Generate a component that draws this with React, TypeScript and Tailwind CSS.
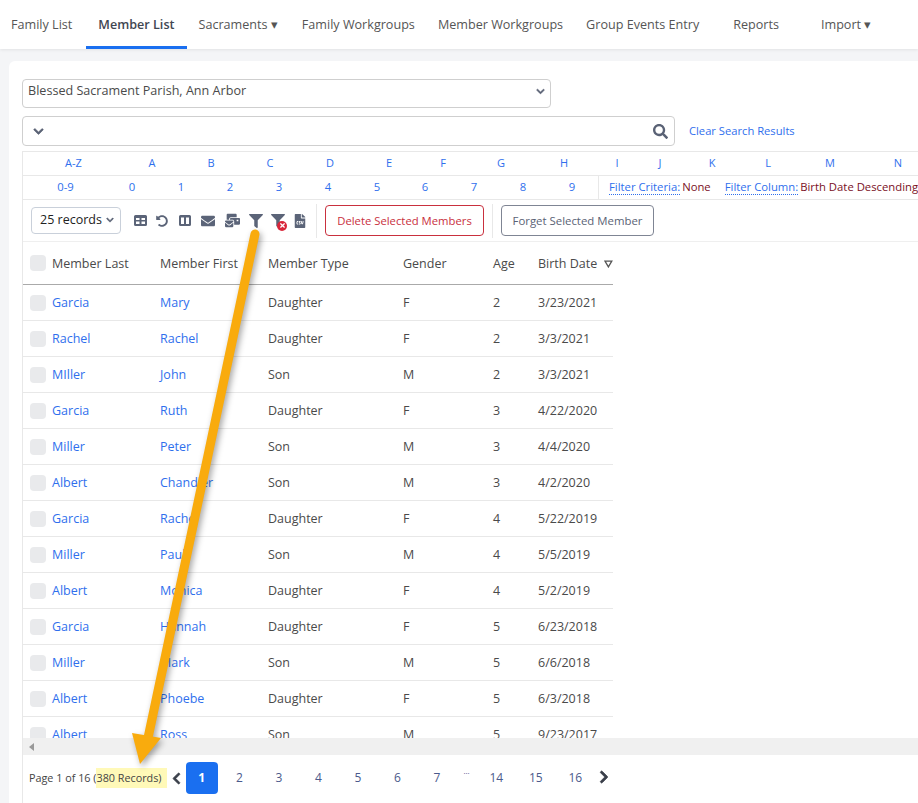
import { FaChevronDown, FaChevronLeft, FaChevronRight, FaEnvelope, FaFileCsv, FaFilter, FaMailBulk, FaSearch, FaTimes, FaUndoAlt } from 'react-icons/fa'

const navItems = [
  { label: 'Family List', cls: 'ml-[11px]' },
  { label: 'Member List', cls: 'ml-[14px] px-3 font-semibold text-[#3f4652] border-b-[3px] border-t-[3px] border-t-transparent border-b-[#1a6ff0]' },
  { label: 'Sacraments ▾', cls: 'ml-3' },
  { label: 'Family Workgroups', cls: 'ml-6' },
  { label: 'Member Workgroups', cls: 'ml-[23px]' },
  { label: 'Group Events Entry', cls: 'ml-[23px]' },
  { label: 'Reports', cls: 'ml-[34px]' },
  { label: 'Import ▾', cls: 'ml-[42px]' },
]

const letters = [
  { label: 'A-Z', w: 'w-[101px]' },
  { label: 'A', w: 'w-[56px]' },
  { label: 'B', w: 'w-[62px]' },
  { label: 'C', w: 'w-[56px]' },
  { label: 'D', w: 'w-[64px]' },
  { label: 'E', w: 'w-[54px]' },
  { label: 'F', w: 'w-[54px]' },
  { label: 'G', w: 'w-[62px]' },
  { label: 'H', w: 'w-[64px]' },
  { label: 'I', w: 'w-[42px]' },
  { label: 'J', w: 'w-[44px]' },
  { label: 'K', w: 'w-[60px]' },
  { label: 'L', w: 'w-[52px]' },
  { label: 'M', w: 'w-[72px]' },
  { label: 'N', w: 'w-[64px]' },
]

const digits = [
  { label: '0-9', w: 'w-[85px]' },
  { label: '0', w: 'w-[48px]' },
  { label: '1', w: 'w-[50px]' },
  { label: '2', w: 'w-[48px]' },
  { label: '3', w: 'w-[50px]' },
  { label: '4', w: 'w-[48px]' },
  { label: '5', w: 'w-[50px]' },
  { label: '6', w: 'w-[46px]' },
  { label: '7', w: 'w-[52px]' },
  { label: '8', w: 'w-[46px]' },
  { label: '9', w: 'w-[52px]' },
]

const members = [
  ['Garcia', 'Mary', 'Daughter', 'F', '2', '3/23/2021'],
  ['Rachel', 'Rachel', 'Daughter', 'F', '2', '3/3/2021'],
  ['MIller', 'John', 'Son', 'M', '2', '3/3/2021'],
  ['Garcia', 'Ruth', 'Daughter', 'F', '3', '4/22/2020'],
  ['Miller', 'Peter', 'Son', 'M', '3', '4/4/2020'],
  ['Albert', 'Chandler', 'Son', 'M', '3', '4/2/2020'],
  ['Garcia', 'Rachel', 'Daughter', 'F', '4', '5/22/2019'],
  ['Miller', 'Paul', 'Son', 'M', '4', '5/5/2019'],
  ['Albert', 'Monica', 'Daughter', 'F', '4', '5/2/2019'],
  ['Garcia', 'Hannah', 'Daughter', 'F', '5', '6/23/2018'],
  ['Miller', 'Mark', 'Son', 'M', '5', '6/6/2018'],
  ['Albert', 'Phoebe', 'Daughter', 'F', '5', '6/3/2018'],
  ['Albert', 'Ross', 'Son', 'M', '5', '9/23/2017'],
]

const rowCols = 'grid grid-cols-[29px_108px_108px_135px_90px_45px_75px] items-center w-[590px]'
const pages = ['2', '3', '4', '5', '6', '7']
const lastPages = ['14', '15', '16']

function GridIcon() {
  return (
    <svg className="w-[13px] h-[11px]" viewBox="0 0 13 11" fill="currentColor">
      <path fillRule="evenodd" d="M1.5 0h10A1.5 1.5 0 0 1 13 1.5v8a1.5 1.5 0 0 1-1.5 1.5h-10A1.5 1.5 0 0 1 0 9.5v-8A1.5 1.5 0 0 1 1.5 0zM2 3v2h3.5V3zm5.500 0v2H11V3zM2 6.500V9h3.5V6.500zm5.500 0V9H11V6.500z" />
    </svg>
  )
}

function ColumnsIcon() {
  return (
    <svg className="w-[12px] h-[11px]" viewBox="0 0 12 11" fill="currentColor">
      <path fillRule="evenodd" d="M1.500 0h9A1.500 1.500 0 0 1 12 1.500v8a1.500 1.500 0 0 1-1.500 1.500h-9A1.500 1.500 0 0 1 0 9.500v-8A1.500 1.500 0 0 1 1.500 0zM2 2.500V9h3V2.500zm5 0V9h3V2.500z" />
    </svg>
  )
}

function FilterClear() {
  return (
    <span className="relative block w-[16px] h-[14px]">
      <FaFilter className="text-[14px]" />
      <span className="absolute right-0 bottom-[-3px] w-[10px] h-[10px] rounded-full bg-[#d9263a] flex items-center justify-center">
        <FaTimes className="text-[7px] text-white" />
      </span>
    </span>
  )
}

export default function App() {
  return (
    <div className="relative w-[918px] h-[803px] overflow-hidden bg-[#f4f5f7] font-['Open_Sans',sans-serif] text-[#555]">
      <nav className="flex items-stretch h-[49px] pt-[2px] bg-white shadow-[0_1px_3px_rgba(0,0,0,0.08)] text-[12.6px] text-[#555] whitespace-nowrap">
        {navItems.map(item => (
          <div key={item.label} className={`flex items-center ${item.cls}`}>
            {item.label}
          </div>
        ))}
      </nav>

      <main className="ml-[9px] mt-3 w-[930px] h-[742px] bg-white rounded-tl-md pt-[18px] pl-[13px]">
        <div className="flex w-[529px] h-[29px] items-start justify-between pl-[5px] pr-[5px] pt-[2px] border border-[#cfcfcf] rounded text-[12.6px] text-[#4a4a4a]">
          Blessed Sacrament Parish, Ann Arbor
          <FaChevronDown className="mt-[5px] text-[9px] text-[#5a6275] stroke-[30px]" />
        </div>

        <div className="flex items-center mt-2">
          <div className="flex items-center justify-between w-[653px] h-[30px] pl-[10px] pr-[9px] border border-[#cfcfcf] rounded">
            <FaChevronDown className="text-[11px] text-[#5a6275] stroke-[30px]" />
            <FaSearch className="text-[15px] text-[#5a6275] -mr-[3px]" />
          </div>
          <a className="ml-[14px] text-[11.2px] font-medium text-[#2f6fed]">Clear Search Results</a>
        </div>

        <section className="mt-[5px] border-l border-[#e8e8e8] h-[604px] flex flex-col">
          <div className="flex h-[25px] items-center border-y border-[#e8e8e8] text-[11px] text-[#2f6fed]">
            {letters.map(l => (
              <div key={l.label} className={`${l.w} text-center shrink-0`}>{l.label}</div>
            ))}
          </div>
          <div className="flex h-[24px] items-center border-b border-[#e8e8e8] text-[11.3px] text-[#2f6fed]">
            {digits.map(d => (
              <div key={d.label} className={`${d.w} text-center shrink-0`}>{d.label}</div>
            ))}
            <div className="flex items-center h-full pl-[10px] border-l border-[#e8e8e8] whitespace-nowrap">
              <span className="border-b border-dotted border-[#2f6fed] leading-[14px]">Filter Criteria:</span>
              <span className="ml-[2px] text-[#7a0f1e]">None</span>
              <span className="ml-[14px] border-b border-dotted border-[#2f6fed] leading-[14px]">Filter Column:</span>
              <span className="ml-[2px] text-[#7a0f1e]">Birth Date Descending</span>
            </div>
          </div>

          <div className="flex items-center h-[42px] border-b border-[#efefef] pl-2 text-[#5b6478]">
            <div className="flex items-center justify-between w-[90px] h-[27px] pl-2 pr-[6px] pb-px border border-[#c9d0da] rounded text-[12.5px] text-[#222]">
              25 records
              <FaChevronDown className="text-[8px] text-[#5a6275] stroke-[30px]" />
            </div>
            <div className="flex items-center ml-[13px]">
              <GridIcon />
              <FaUndoAlt className="ml-[9px] text-[12px]" />
              <span className="ml-[11px]"><ColumnsIcon /></span>
              <FaEnvelope className="ml-[10px] text-[14px]" />
              <FaMailBulk className="ml-[10px] text-[15px]" />
              <FaFilter className="ml-[9px] text-[14px]" />
              <span className="ml-2"><FilterClear /></span>
              <FaFileCsv className="ml-[6px] text-[14px]" />
            </div>
            <div className="ml-[9px] w-px h-[34px] bg-[#e8e8e8]" />
            <button className="ml-2 w-[159px] h-[31px] pt-px border border-[#c9303e] rounded text-[11.3px] text-[#c9303e]">
              Delete Selected Members
            </button>
            <div className="ml-2 w-px h-[34px] bg-[#e8e8e8]" />
            <button className="ml-2 w-[153px] h-[31px] pt-px border border-[#7f8594] rounded text-[11.4px] text-[#5a6275]">
              Forget Selected Member
            </button>
          </div>

          <div className="flex-1 overflow-hidden">
            <div className={`${rowCols} h-[43px] pt-[2px] border-b border-[#aaa] text-[12.5px] text-[#4a4a4a]`}>
              <span className="ml-[7px] -mt-[2px] w-4 h-4 rounded-sm bg-[#e9eaec]" />
              <span>Member Last</span>
              <span>Member First</span>
              <span>Member Type</span>
              <span>Gender</span>
              <span>Age</span>
              <span className="flex items-center whitespace-nowrap">
                Birth Date
                <svg className="ml-[7px] w-[9px] h-[8px]" viewBox="0 0 9 8">
                  <path d="M1 1h7L4.5 7z" fill="none" stroke="#555" strokeWidth="1.3" />
                </svg>
              </span>
            </div>
            {members.map((m, i) => (
              <div key={i} className={`${rowCols} h-[36px] pt-[2px] border-b border-[#e8e8e8] text-[12.5px] text-[#4a4a4a]`}>
                <span className="ml-[7px] -mt-[2px] w-4 h-4 rounded-sm bg-[#e9eaec]" />
                <a className="text-[#2f6fed]">{m[0]}</a>
                <a className="text-[#2f6fed]">{m[1]}</a>
                <span>{m[2]}</span>
                <span>{m[3]}</span>
                <span>{m[4]}</span>
                <span>{m[5]}</span>
              </div>
            ))}
          </div>

          <div className="flex items-center shrink-0 h-[17px] bg-[#f0f0f0] pl-[6px]">
            <span className="w-0 h-0 border-y-[4px] border-y-transparent border-r-[5px] border-r-[#999]" />
          </div>
        </section>
      </main>

      <footer className="absolute left-[22px] top-[755px] flex items-center w-[896px] h-[48px] pb-[2px] bg-white border-l border-[#e8e8e8] text-[10.8px] text-[#444]">
        <span className="ml-[6px] whitespace-nowrap">Page 1 of 16 (</span>
        <span className="h-[20px] leading-[20px] pr-[5px] bg-[#fff9b8] whitespace-nowrap">380 Records)</span>
        <FaChevronLeft className="ml-[3px] text-[13px] text-[#3a3f4a] stroke-[30px]" />
        <span className="ml-[3px] flex items-center justify-center w-8 h-8 rounded bg-[#1a6ff0] text-[12px] font-bold text-white">1</span>
        <div className="flex ml-[2px] text-[12px] text-[#4b5a8c]">
          {pages.map(p => (
            <span key={p} className="w-[39.5px] text-center">{p}</span>
          ))}
          <span className="w-[20px] -mt-[3px] text-center text-[8px] leading-[10px]">...</span>
          {lastPages.map(p => (
            <span key={p} className="w-[39.5px] text-center">{p}</span>
          ))}
        </div>
        <FaChevronRight className="ml-[2px] text-[14px] text-[#3a3f4a] -mt-[2px] stroke-[30px]" />
      </footer>

      <svg className="absolute left-0 top-0 w-[918px] h-[803px] pointer-events-none drop-shadow-[2px_3px_3px_rgba(0,0,0,0.35)]" viewBox="0 0 918 803">
        <line x1="255" y1="234" x2="148" y2="738" stroke="#f9ab0d" strokeWidth="9" strokeLinecap="round" />
        <polygon points="132,733 161,738 140,764" fill="#f9ab0d" />
      </svg>
    </div>
  )
}
